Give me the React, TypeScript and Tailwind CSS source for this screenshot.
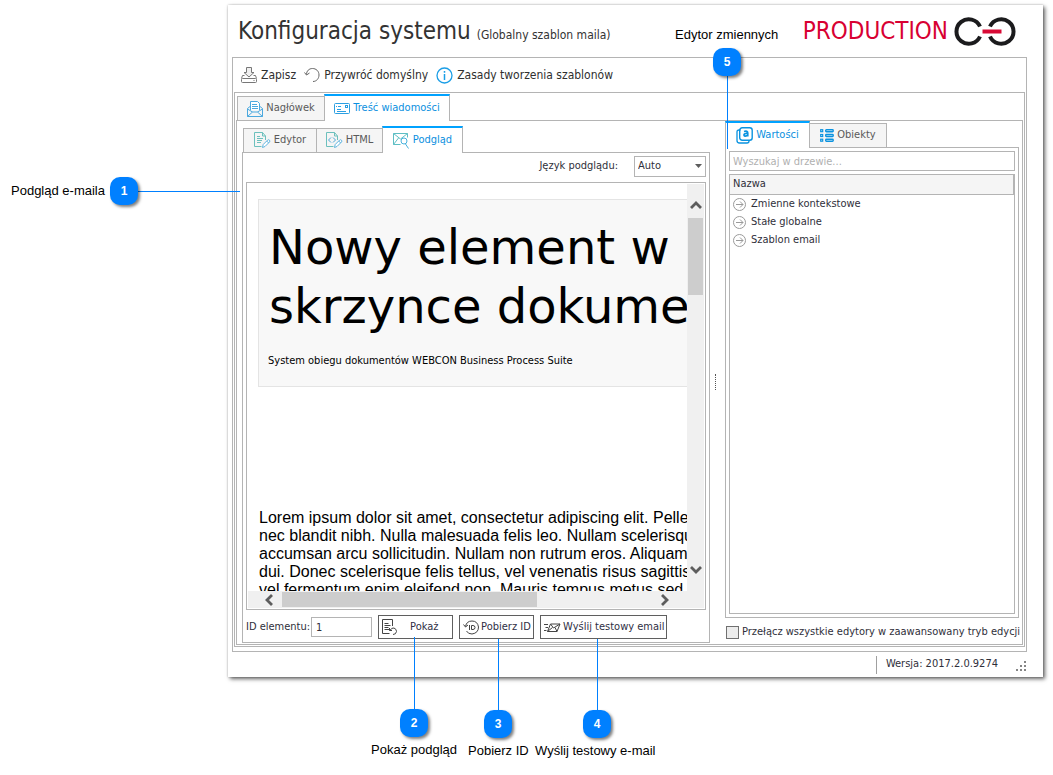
import type { ReactNode } from "react";
import clsx from "clsx";

interface IconProps {
    className?: string
}

interface SvgIconProps extends IconProps {
    width: number
    height: number
    children: ReactNode
}

function SvgIcon({ width, height, className, children }: SvgIconProps) {
    return (
        <svg width={width} height={height} viewBox={`0 0 ${width} ${height}`} fill="none" stroke="currentColor" strokeWidth="1" className={clsx("shrink-0", className)} aria-hidden="true">
            {children}
        </svg>
    )
}

function SaveIcon({ className }: IconProps) {
    return (
        <SvgIcon width={16} height={17} className={className}>
            <path d="M5.5.5h5v5h2.500L8 10 3 5.500h2.500z" fill="#f0f0f0" />
            <path d="M3.500 8.500h-2l-1 3M12.500 8.500h2l1 3" />
            <rect x=".5" y="11.500" width="15" height="4" rx="1" />
            <path d="M12.500 13.500h1" />
        </SvgIcon>
    )
}

function RestoreIcon({ className }: IconProps) {
    return (
        <SvgIcon width={16} height={16} className={className}>
            <path d="M2.500 7.500C2.500 4 5 1.500 8.500 1.500c3.500 0 6.500 2.500 6.500 6.500 0 3.500-2.500 6.500-6 6.500" />
            <path d="M.5 5.500l2 2.500 3-2" />
        </SvgIcon>
    )
}

function InfoIcon({ className }: IconProps) {
    return (
        <SvgIcon width={17} height={17} className={className}>
            <circle cx="8.500" cy="8.500" r="7.500" strokeWidth="1.300" />
            <path d="M8.500 7v6M8.500 4v1.700" strokeWidth="1.500" />
        </SvgIcon>
    )
}

function HeaderIcon() {
    return (
        <SvgIcon width={16} height={16} className="text-[#4ba9df]">
            <path d="M3.500 9V.5h7l2 2V9" fill="#fff" />
            <path d="M5 3.500h5M5 5.500h6M5 7.500h6" />
            <path d="M3 5.500L.5 7.500v8h15v-8L13 5.500M.5 8l5 3h5l5-3M.5 15.500l5-4.500M15.500 15.500l-5-4.500" />
        </SvgIcon>
    )
}

function MessageIcon() {
    return (
        <SvgIcon width={16} height={12} className="text-[#2b9fe2]">
            <rect x=".5" y=".5" width="15" height="10" rx="1" />
            <rect x="11.500" y="2.500" width="2" height="2" />
            <path d="M2 3.500h1M4 3.500h3M3 6.500h4M3 8.500h9" />
        </SvgIcon>
    )
}

function Pencil() {
    return <path d="M8.500 15.500l.7-3 4.500-4.500q1-.7 1.800.2t0 1.800L11 14.500zM12.700 9l2 2" stroke="#5fb4e0" fill="#fff" />
}

function EditorIcon() {
    return (
        <SvgIcon width={17} height={17} className="text-[#6cc0bd]">
            <path d="M11.500 8V4L8.500.5H.5v14h7M8.500.5V4h3" />
            <path d="M3 4.500h3M3 6.500h6M3 8.500h5M3 10.500h4" />
            <Pencil />
        </SvgIcon>
    )
}

function HtmlIcon() {
    return (
        <SvgIcon width={17} height={17} className="text-[#6cc0bd]">
            <path d="M11.500 8V4L8.500.5H.5v14h7M8.500.5V4h3" />
            <path d="M5 5.500L2.500 8 5 10.500M7 5.500L9.500 8 7 10.500" stroke="#4ea8d8" />
            <Pencil />
        </SvgIcon>
    )
}

function PreviewIcon() {
    return (
        <SvgIcon width={17} height={16} className="text-[#5dbec4]">
            <path d="M7.500 11.500h-7V.5h14v4M.5.5L7.500 6 14.500.5M.5 11.500L5.500 5" />
            <circle cx="11" cy="8" r="3" stroke="#47b2dd" />
            <path d="M12.500 11l3 4.500" stroke="#47b2dd" />
        </SvgIcon>
    )
}

function ValuesIcon() {
    return (
        <SvgIcon width={17} height={17} className="text-[#0a93e0]">
            <path d="M4.500 3H3Q1 3 1 5v8.500Q1 16 3.500 16H11q2 0 2-2" strokeWidth="1.300" />
            <rect x="3.700" y=".7" width="12.500" height="12.500" rx="2.500" strokeWidth="1.400" />
            <path d="M8 4.500Q11.700 3.500 11.700 6V9.500M11.500 6.500Q8 6.200 8 8q0 1.800 3.500.5" strokeWidth="1.800" />
        </SvgIcon>
    )
}

function ObjectsIcon() {
    return (
        <SvgIcon width={14} height={13} className="text-[#0a93e0]">
            <rect x=".7" y=".7" width="2" height="2" strokeWidth="1.200" />
            <rect x=".7" y="5.500" width="2" height="2" strokeWidth="1.200" />
            <rect x=".7" y="10.200" width="2" height="2" strokeWidth="1.200" />
            <rect x="5.700" y=".7" width="7.500" height="2" rx=".7" strokeWidth="1.400" />
            <rect x="5.700" y="5.500" width="7.500" height="2" rx=".7" strokeWidth="1.400" />
            <rect x="5.700" y="10.200" width="7.500" height="2" rx=".7" strokeWidth="1.400" />
        </SvgIcon>
    )
}

function NodeIcon() {
    return (
        <SvgIcon width={13} height={13} className="text-[#9a9a9a]">
            <circle cx="6.500" cy="6.500" r="6" />
            <path d="M3 6.500h7M7 3.500l3 3-3 3" />
        </SvgIcon>
    )
}

function ShowIcon() {
    return (
        <SvgIcon width={16} height={17} className="text-[#444444]">
            <path d="M10.500 7V.5H.5v14h7" />
            <path d="M2.500 4.500h4M2.500 6.500h6M2.500 8.500h4M2.500 10.500h6" />
            <path d="M8 11.500q1.500-3 4-2.500 2.500 1 2.500 3.500-.5 3-3.500 3M7.500 9v2.500H10" />
        </SvgIcon>
    )
}

function FetchIdIcon() {
    return (
        <SvgIcon width={17} height={15} className="text-[#444444]">
            <path d="M2.500 6.500Q3.500 1 9 1t6.500 6Q15.500 13 9 14q-4 0-5.500-3" />
            <path d="M.5 4.500l2 2.500L5 5" />
            <path d="M6.500 5v5M8.500 5.500h1.500Q12 5.500 12 7.500t-2 2H8.500z" />
        </SvgIcon>
    )
}

function SendIcon() {
    return (
        <SvgIcon width={17} height={9} className="text-[#444444]">
            <path d="M6.500 1h9.500l-3 7.500H3.500zM6.500 1l3 4L16 1M3.500 8.500l5-4M13 8.500l-2-4" />
            <path d="M0 1.500h4M1.500 4.500h2.500M0 7.500h2.500" />
        </SvgIcon>
    )
}

function Logo() {
    return (
        <svg width="62" height="29" viewBox="0 0 62 29" fill="none" strokeWidth="4" aria-hidden="true">
            <path d="M26 9.500A12.300 12.300 0 1 0 26 19.500" stroke="#1b1b1d" />
            <path d="M36 9.500A12.300 12.300 0 1 1 36 19.500" stroke="#1b1b1d" />
            <path d="M28.500 14.500h19" stroke="#d80a35" />
        </svg>
    )
}

interface ArrowProps {
    direction: "up" | "down" | "left" | "right"
}

function ScrollArrow({ direction }: ArrowProps) {
    const rotation = {
        up: "",
        down: "rotate-180",
        left: "-rotate-90",
        right: "rotate-90",
    }[direction];

    return (
        <svg width="12" height="10" viewBox="0 0 12 10" fill="none" stroke="#5d5d5d" strokeWidth="2.800" className={rotation} aria-hidden="true">
            <path d="M1 8l5-5 5 5" />
        </svg>
    )
}

interface TabProps {
    label: string
    icon: ReactNode
    active?: boolean
    className: string
}

function Tab({ label, icon, active, className }: TabProps) {
    return (
        <button
            type="button"
            role="tab"
            aria-selected={!!active}
            className={clsx(
                "relative flex items-center justify-center gap-[3px] border-x whitespace-nowrap border-[#b4b4b4] text-[11px]",
                active
                    ? "-mb-px h-[27px] border-t-2 border-t-[#00a2ff] bg-white text-[#0a8fe0]"
                    : "h-6 border-t bg-[#f5f5f5] text-[#5a5a5a]",
                className
            )}
        >
            {icon}
            {label}
        </button>
    )
}

function Toolbar() {
    return (
        <div className="flex h-[34px] items-center gap-2 pl-[7px] text-[12px] text-[#2f2f2f]">
            <button type="button" className="flex items-center gap-1"><SaveIcon className="text-[#777777]" />Zapisz</button>
            <button type="button" className="flex items-center gap-1"><RestoreIcon className="text-[#666666]" />Przywróć domyślny</button>
            <button type="button" className="flex items-center gap-1"><InfoIcon className="text-[#1b9ee6]" />Zasady tworzenia szablonów</button>
        </div>
    )
}

const loremLines = [
    "Lorem ipsum dolor sit amet, consectetur adipiscing elit. Pellentesque",
    "nec blandit nibh. Nulla malesuada felis leo. Nullam scelerisque",
    "accumsan arcu sollicitudin. Nullam non rutrum eros. Aliquam eu",
    "dui. Donec scelerisque felis tellus, vel venenatis risus sagittis ac,",
    "vel fermentum enim eleifend non. Mauris tempus metus sed tristique",
];

function MailPreview() {
    return (
        <div className="mx-[3px] grid grid-cols-[1fr_17px] grid-rows-[407px_17px] border border-[#b4b4b4] p-px">
            <div className="overflow-hidden whitespace-nowrap pt-[15px] pl-[10px] text-black">
                <div className="h-[188px] w-[600px] border border-[#e4e4e4] bg-[#f8f8f8] pt-[18px] pl-[9px]">
                    <h2 className="pl-px font-['DejaVu_Sans',Verdana,sans-serif] text-[48px] leading-[59px]">
                        Nowy element w<br />skrzynce dokumentów
                    </h2>
                    <p className="mt-[17px] text-[11px] leading-4">System obiegu dokumentów WEBCON Business Process Suite</p>
                </div>
                <div className="mt-[122px] pl-px font-['Liberation_Sans',Arial,sans-serif] text-[16px] leading-[18px]">
                    {loremLines.map((line) => <p key={line}>{line}</p>)}
                </div>
            </div>
            <div className="flex flex-col items-center bg-[#f0f0f0]">
                <div className="flex h-[34px] items-end pb-2"><ScrollArrow direction="up" /></div>
                <div className="h-[77px] w-[15px] bg-[#cdcdcd]" />
                <div className="mt-auto flex h-[43px] items-center"><ScrollArrow direction="down" /></div>
            </div>
            <div className="flex items-center bg-[#f0f0f0]">
                <div className="flex w-[34px] justify-end pr-[7px]"><ScrollArrow direction="left" /></div>
                <div className="h-[15px] w-[255px] bg-[#cdcdcd]" />
                <div className="mr-4 ml-auto"><ScrollArrow direction="right" /></div>
            </div>
            <div className="bg-[#f0f0f0]" />
        </div>
    )
}

const actionClass = "flex h-6 items-center border border-[#5f5f5f] pl-[3px] text-[11px] whitespace-nowrap text-[#2f2f45]";

function PreviewActions() {
    return (
        <div className="flex h-8 items-center gap-[6px] pt-[2px]">
            <div className="flex items-center gap-px pl-[3px]">
                <label htmlFor="element-id" className="whitespace-nowrap">ID elementu:</label>
                <input id="element-id" defaultValue="1" className="h-5 w-[61px] border border-[#b4b4b4] px-1" />
            </div>
            <button type="button" className={clsx(actionClass, "w-[75px] gap-3")}><ShowIcon />Pokaż</button>
            <button type="button" className={clsx(actionClass, "w-[75px] gap-px")}><FetchIdIcon />Pobierz ID</button>
            <button type="button" className={clsx(actionClass, "w-[127px] gap-[2px]")}><SendIcon />Wyślij testowy email</button>
        </div>
    )
}

function MessagePanel() {
    return (
        <section className="mt-[5px] min-w-0 flex-1">
            <div className="flex items-end pl-px" role="tablist">
                <Tab label="Edytor" icon={<EditorIcon />} className="w-[74px]" />
                <Tab label="HTML" icon={<HtmlIcon />} className="-ml-px w-[67px]" />
                <Tab label="Podgląd" icon={<PreviewIcon />} active className="-ml-px w-[81px]" />
            </div>
            <div className="border border-[#b4b4b4]">
                <div className="flex h-[29px] items-center justify-end pr-[3px] pb-[2px]">
                    <label htmlFor="preview-language">Język podglądu:</label>
                    <div className="relative ml-4">
                        <select id="preview-language" className="block h-[21px] w-[72px] appearance-none border border-[#b4b4b4] bg-white pl-[3px]">
                            <option>Auto</option>
                        </select>
                        <svg width="7" height="4" viewBox="0 0 7 4" className="pointer-events-none absolute top-2 right-1" aria-hidden="true">
                            <path d="M0 0h7L3.500 4z" fill="#5d5d5d" />
                        </svg>
                    </div>
                </div>
                <MailPreview />
                <PreviewActions />
            </div>
        </section>
    )
}

const variableGroups = ["Zmienne kontekstowe", "Stałe globalne", "Szablon email"];

function VariablesPanel() {
    return (
        <section className="mr-[3px] flex w-[294px] shrink-0 flex-col">
            <div className="flex items-end" role="tablist">
                <Tab label="Wartości" icon={<ValuesIcon />} active className="w-[85px]" />
                <Tab label="Obiekty" icon={<ObjectsIcon />} className="-ml-px w-[78px]" />
            </div>
            <div className="flex flex-1 flex-col border border-[#b4b4b4] p-[3px]">
                <input type="search" aria-label="Wyszukaj w drzewie" placeholder="Wyszukaj w drzewie..." className="h-5 shrink-0 border border-[#b4b4b4] px-[3px] placeholder:text-[#b0b0b0]" />
                <div className="mt-[3px] flex-1 border border-[#b4b4b4]">
                    <div className="flex h-5 items-center border-r border-b border-[#b4b4b4] bg-[#f5f5f5] pl-[3px]">Nazwa</div>
                    <ul>
                        {variableGroups.map((group) => (
                            <li key={group} className="flex h-[18px] items-center gap-[5px] pl-[3px]"><NodeIcon />{group}</li>
                        ))}
                    </ul>
                </div>
            </div>
            <label className="flex h-[25px] items-center gap-[3px] whitespace-nowrap pt-[3px]">
                <input type="checkbox" className="ml-px size-[13px] shrink-0 appearance-none border border-[#707070] bg-[#ececec] checked:bg-[#0080ff]" />
                Przełącz wszystkie edytory w zaawansowany tryb edycji
            </label>
        </section>
    )
}

function ConfigWindow() {
    return (
        <main className="mr-[10px] ml-[228px] bg-white px-1 text-[11px] text-[#2f2f3a] shadow-[2px_2px_4px_rgba(0,0,0,0.6),0_0_2px_rgba(0,0,0,0.25)]">
            <header className="flex h-[52px] items-center justify-between pr-[23px] pl-[6px]">
                <h1 className="flex items-baseline gap-[6px] text-[24px] whitespace-nowrap text-[#333333]">
                    Konfiguracja systemu
                    <small className="text-[12px]">(Globalny szablon maila)</small>
                </h1>
                <div className="flex items-center gap-[6px] text-[24px] text-[#d80032]">PRODUCTION<Logo /></div>
            </header>

            <div className="mr-3 border border-[#b4b4b4] px-px pb-1">
                <Toolbar />
                <div className="border border-[#b4b4b4] px-px pt-px pb-px">
                    <div className="flex items-end pl-px" role="tablist">
                        <Tab label="Nagłówek" icon={<HeaderIcon />} className="w-[88px]" />
                        <Tab label="Treść wiadomości" icon={<MessageIcon />} active className="-ml-px w-[126px]" />
                    </div>
                    <div className="flex border border-[#b4b4b4] pb-px pl-[5px]">
                        <MessagePanel />
                        <div className="flex w-[15px] shrink-0 items-center pl-[5px]">
                            <div className="h-4 border-l border-dotted border-[#555555]" />
                        </div>
                        <VariablesPanel />
                    </div>
                </div>
            </div>

            <footer className="flex h-[25px] items-center justify-end pr-3">
                <div className="flex h-[18px] items-center border-l border-[#a0a0a0] pl-[9px]">Wersja: 2017.2.0.9274</div>
                <svg width="12" height="12" viewBox="0 0 12 12" fill="#858585" className="mt-[5px] ml-[17px]" aria-hidden="true">
                    <path d="M9 0h2v2H9zM5 4h2v2H5zM9 4h2v2H9zM1 8h2v2H1zM5 8h2v2H5zM9 8h2v2H9z" />
                </svg>
            </footer>
        </main>
    )
}

interface CalloutProps {
    number: number
    label: string
    chip: string
    line: string
    text: string
}

// Callouts float over the window, each one pinned to the control it describes
const callouts: CalloutProps[] = [
    { number: 1, label: "Podgląd e-maila", chip: "top-[177px] left-[110px]", line: "top-[191px] left-[138px] h-px w-[102px]", text: "top-[183px] left-[11px]" },
    { number: 2, label: "Pokaż podgląd", chip: "top-[709px] left-[400px]", line: "top-[637px] left-[414px] h-[72px] w-px", text: "top-[742px] left-[371px]" },
    { number: 3, label: "Pobierz ID", chip: "top-[710px] left-[484px]", line: "top-[639px] left-[498px] h-[71px] w-px", text: "top-[743px] left-[468px]" },
    { number: 4, label: "Wyślij testowy e-mail", chip: "top-[710px] left-[583px]", line: "top-[639px] left-[597px] h-[71px] w-px", text: "top-[743px] left-[535px]" },
    { number: 5, label: "Edytor zmiennych", chip: "top-[48px] left-[713px]", line: "top-[76px] left-[727px] h-[73px] w-px", text: "top-[27px] left-[675px]" },
];

function Callout(props: CalloutProps) {
    const { number, label, chip, line, text } = props;

    return (
        <>
            <span className={clsx("absolute bg-[#0080ff]", line)} />
            <span className={clsx("absolute flex size-7 items-center justify-center rounded-[10px] bg-[#0080ff] text-[12px] font-bold text-white shadow-[2px_2px_3px_rgba(0,0,0,0.5)]", chip)}>{number}</span>
            <span className={clsx("absolute text-[13px] leading-4 whitespace-nowrap text-black", text)}>{label}</span>
        </>
    )
}

export default function App() {
    return (
        <div className="relative bg-white pt-[5px] pb-[97px] font-['DejaVu_Sans_Condensed','DejaVu_Sans',Tahoma,sans-serif]">
            <ConfigWindow />
            <div className="font-['Liberation_Sans',Arial,sans-serif]">
                {callouts.map((callout) => <Callout key={callout.number} {...callout} />)}
            </div>
        </div>
    )
}
